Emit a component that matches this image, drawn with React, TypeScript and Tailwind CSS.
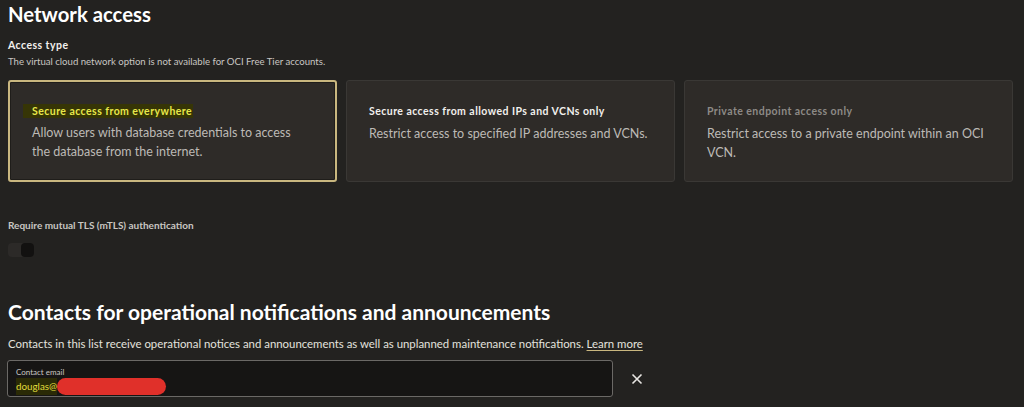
import React from "react";

const font = { fontFamily: "Lato, 'Noto Sans', sans-serif" };

function Card({
  title,
  desc,
  selected,
  disabled,
}: {
  title: string;
  desc: string;
  selected?: boolean;
  disabled?: boolean;
}) {
  return (
    <div
      className={
        "h-[102px] rounded-[3px] pl-[22px] pr-[24px] " +
        (selected
          ? "border-2 border-[#c9b77f] bg-[#2e2b28] pt-[22px] shadow-[inset_0_0_0_1px_#1f1d1a]"
          : "border border-[#3a3835] bg-[#2e2b28] pt-[23px]")
      }
    >
      <div className="flex text-[10.5px] font-bold leading-[14px] tracking-[0.45px]">
        <span
          className={
            selected
              ? "-ml-[9px] bg-[#363506] pl-[9px] pr-[1px] text-[#e8e84a]"
              : disabled
              ? "text-[#8d8a86]"
              : "text-[#f2f0ed]"
          }
        >
          {title}
        </span>
      </div>
      <div
        className={
          "text-[12.5px] leading-[19px] text-[#bdbab6] " +
          (selected ? "mt-[5px]" : "mt-[6px]")
        }
      >
        {desc}
      </div>
    </div>
  );
}

export default function App() {
  return (
    <div
      className="h-[407px] w-[1024px] overflow-hidden bg-[#232220] pl-[8px] pr-[11px] text-[#f2f0ed]"
      style={font}
    >
      <h1 className="pt-[1px] text-[20.3px] font-bold leading-[26px] text-white">
        Network access
      </h1>
      <div className="mt-[11px] text-[10.5px] font-bold leading-[14px] tracking-[0.45px] text-[#f2f0ed]">
        Access type
      </div>
      <div className="mt-[3px] text-[9.6px] leading-[13px] text-[#c9c6c2]">
        The virtual cloud network option is not available for OCI Free Tier accounts.
      </div>
      <div className="mt-[12px] grid grid-cols-3 gap-[9px]">
        <Card
          selected
          title="Secure access from everywhere"
          desc="Allow users with database credentials to access the database from the internet."
        />
        <Card
          title="Secure access from allowed IPs and VCNs only"
          desc="Restrict access to specified IP addresses and VCNs."
        />
        <Card
          disabled
          title="Private endpoint access only"
          desc="Restrict access to a private endpoint within an OCI VCN."
        />
      </div>
      <div className="mt-[37px] text-[10px] font-bold leading-[13px] text-[#c9c6c2]">
        Require mutual TLS (mTLS) authentication
      </div>
      <div className="mt-[11px] flex h-[14px] w-[26px] items-center justify-end rounded-[4px] bg-[#2c2a28]">
        <div className="h-[14px] w-[13px] rounded-[4px] bg-[#121110]" />
      </div>
      <h2 className="mt-[42px] text-[21px] font-bold leading-[26px] text-white">
        Contacts for operational notifications and announcements
      </h2>
      <div className="mt-[12px] text-[11.4px] leading-[14px] text-[#e4e2df]">
        Contacts in this list receive operational notices and announcements as well as unplanned maintenance notifications.{" "}
        <span className="text-[#e4e2df] underline decoration-[#c9b77f] underline-offset-2">
          Learn more
        </span>
      </div>
      <div className="mt-[9px] flex items-center">
        <div className="-ml-[1px] h-[37px] w-[606px] rounded-[3px] border border-[#6b6966] bg-[#161514] px-[8px] pt-[6px]">
          <div className="text-[8px] leading-[11px] text-[#c9c6c2]">Contact email</div>
          <div className="flex items-center text-[9.8px] leading-[17px]">
            <span className="bg-[#2a2a06] text-[#e0dc3c]">douglas@</span>
            <span className="h-[17px] w-[109px] rounded-full bg-[#e0302a]" />
          </div>
        </div>
        <svg
          className="ml-[18px]"
          width="12"
          height="12"
          viewBox="0 0 12 12"
          fill="none"
          stroke="#e8e6e3"
          strokeWidth="1.6"
        >
          <path d="M1.5 1.5 L10.5 10.5 M10.5 1.5 L1.5 10.5" />
        </svg>
      </div>
    </div>
  );
}
